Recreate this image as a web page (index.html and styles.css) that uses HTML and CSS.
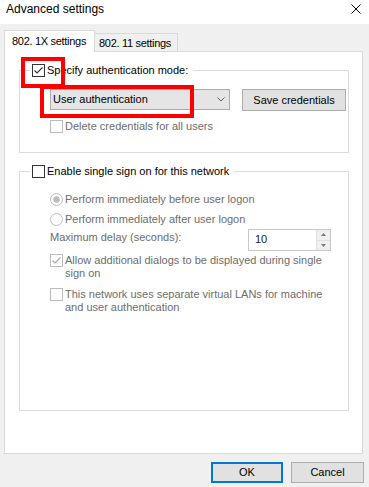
FILE: index.html
```html
<!DOCTYPE html>
<html lang="en">
<head>
<meta charset="utf-8">
<title>Advanced settings</title>
<link rel="stylesheet" href="styles.css">
</head>
<body>
  <div class="titlebar">
    <span class="title">Advanced settings</span>
    <svg class="close" width="10" height="10" viewBox="0 0 10 10"><path d="M0.5 0.5L9.5 9.5M9.5 0.5L0.5 9.5" stroke="#000" stroke-width="1" fill="none"/></svg>
  </div>
  <div class="main">
    <div class="tabs">
      <div class="tab active">802. 1X settings</div>
      <div class="tab inactive">802. 11 settings</div>
    </div>
    <div class="panel">
      <div class="group g1">
        <div class="legend check">
          <svg class="cb" viewBox="0 0 13 13"><rect x="0.5" y="0.5" width="12" height="12" fill="#fff" stroke="#333"/><path d="M2.5 6.5L5 9L10.5 3.5" stroke="#333" stroke-width="1.1" fill="none"/></svg>
          <span>Specify authentication mode:</span>
        </div>
        <div class="row">
          <div class="combo"><span>User authentication</span><svg class="chev" width="8" height="5" viewBox="0 0 8 5"><path d="M0.5 0.5L4 4L7.5 0.5" stroke="#606060" fill="none"/></svg></div>
          <div class="btn save">Save credentials</div>
        </div>
        <div class="check disabled delete">
          <svg class="cb" viewBox="0 0 13 13"><rect x="0.5" y="0.5" width="12" height="12" fill="#fff" stroke="#bcbcbc"/></svg>
          <span>Delete credentials for all users</span>
        </div>
      </div>
      <div class="group g2">
        <div class="legend check">
          <svg class="cb" viewBox="0 0 13 13"><rect x="0.5" y="0.5" width="12" height="12" fill="#fff" stroke="#333"/></svg>
          <span>Enable single sign on for this network</span>
        </div>
        <div class="check disabled r1">
          <svg class="cb" viewBox="0 0 13 13"><circle cx="6.5" cy="6.5" r="6" fill="#fff" stroke="#bcbcbc"/><circle cx="6.5" cy="6.5" r="3.2" fill="#bcbcbc"/></svg>
          <span>Perform immediately before user logon</span>
        </div>
        <div class="check disabled r2">
          <svg class="cb" viewBox="0 0 13 13"><circle cx="6.5" cy="6.5" r="6" fill="#fff" stroke="#bcbcbc"/></svg>
          <span>Perform immediately after user logon</span>
        </div>
        <div class="delay">
          <span class="delay-label disabled">Maximum delay (seconds):</span>
          <div class="spin">
            <span class="spin-value">10</span>
            <div class="spin-arrows">
              <div class="arrow"><svg width="5" height="3" viewBox="0 0 5 3"><path d="M0 3L2.5 0L5 3Z" fill="#7a7a7a"/></svg></div>
              <div class="arrow"><svg width="5" height="3" viewBox="0 0 5 3"><path d="M0 0L2.5 3L5 0Z" fill="#7a7a7a"/></svg></div>
            </div>
          </div>
        </div>
        <div class="check disabled allow">
          <svg class="cb" viewBox="0 0 13 13"><rect x="0.5" y="0.5" width="12" height="12" fill="#fff" stroke="#bcbcbc"/><path d="M2.5 6.5L5 9L10.5 3.5" stroke="#a8a8a8" stroke-width="1.1" fill="none"/></svg>
          <span>Allow additional dialogs to be displayed during single<br>sign on</span>
        </div>
        <div class="check disabled vlan">
          <svg class="cb" viewBox="0 0 13 13"><rect x="0.5" y="0.5" width="12" height="12" fill="#fff" stroke="#bcbcbc"/></svg>
          <span>This network uses separate virtual LANs for machine<br>and user authentication</span>
        </div>
      </div>
    </div>
    <div class="footer">
      <div class="btn ok">OK</div>
      <div class="btn cancel">Cancel</div>
    </div>
  </div>
  <div class="hl hl1"></div>
  <div class="hl hl2"></div>
</body>
</html>
```
FILE: styles.css
```css
* { box-sizing: border-box; }
html, body { margin: 0; padding: 0; }
body {
  width: 369px;
  height: 487px;
  overflow: hidden;
  position: relative;
  background: #f0f0f0;
  color: #000;
  font-family: "Liberation Sans", Arial, sans-serif;
  font-size: 11px;
}
.titlebar {
  height: 24px;
  background: #fff;
  display: flex;
  align-items: flex-start;
  padding: 1px 0 0 6px;
}
.title { font-size: 12px; line-height: 16px; }
.close { margin: 3px 8px 0 auto; }

.main { padding: 6px 6px 0 4px; }

.tabs { display: flex; align-items: flex-end; }
.tab {
  line-height: 13px;
  letter-spacing: -0.3px;
  white-space: nowrap;
  border: 1px solid #d9d9d9;
  border-bottom: 0;
}
.tab.active {
  position: relative;
  z-index: 1;
  width: 91px;
  height: 22px;
  margin-bottom: -1px;
  padding: 4px 0 0 7px;
  background: #fff;
}
.tab.inactive {
  width: 84px;
  height: 18px;
  margin-left: -1px;
  padding: 3px 0 0 4px;
  background: #f0f0f0;
}

.panel {
  height: 403px;
  background: #fff;
  border: 1px solid #d9d9d9;
  padding: 18px 13px 0 14px;
}
.group {
  border: 1px solid #dcdcdc;
  padding: 0 0 0 30px;
}
.g1 { padding-bottom: 19px; }
.g2 { margin-top: 18px; padding-bottom: 96px; }

.check { display: flex; align-items: flex-start; line-height: 13px; }
.cb { flex: none; width: 13px; height: 13px; margin-right: 2px; display: block; }
.disabled { color: #6d6d6d; }

.legend {
  width: max-content;
  margin: -7px 0 0 -20px;
  padding: 0 5px 0 2px;
  background: #fff;
  color: #000;
}

.row { display: flex; align-items: flex-start; height: 22px; margin-top: 12px; }
.combo {
  width: 180px;
  height: 21px;
  border: 1px solid #acacac;
  background: #e5e5e5;
  display: flex;
  align-items: center;
  padding-left: 2px;
  line-height: 19px;
}
.chev { margin-left: auto; margin-right: 4px; display: block; }
.btn {
  border: 1px solid #adadad;
  background: #e1e1e1;
  text-align: center;
}
.save { width: 104px; height: 22px; margin-left: 12px; padding-top: 1px; line-height: 19px; }
.delete { margin-top: 9px; }

.r1 { margin-top: 15px; }
.r2 { margin-top: 7px; }
.delay { display: flex; align-items: flex-start; height: 22px; margin-top: 3px; }
.delay-label { margin-top: 2px; line-height: 13px; }
.spin {
  margin-left: auto;
  margin-right: 17px;
  width: 83px;
  height: 22px;
  border: 1px solid #c8c8c8;
  background: #fff;
  display: flex;
}
.spin-value { flex: 1; padding: 3px 0 0 6px; line-height: 13px; color: #222; }
.spin-arrows {
  width: 14px;
  display: flex;
  flex-direction: column;
  background: #f0f0f0;
  border-left: 1px solid #e0e0e0;
}
.arrow { flex: 1; display: flex; align-items: center; justify-content: center; }
.arrow + .arrow { border-top: 1px solid #e0e0e0; }
.allow { margin-top: 3px; }
.vlan { margin-top: 8px; }

.footer {
  display: flex;
  justify-content: flex-end;
  gap: 8px;
  margin-top: 8px;
  margin-right: -1px;
}
.ok { width: 72px; height: 21px; border: 2px solid #0078d7; line-height: 17px; }
.cancel { width: 73px; height: 21px; line-height: 19px; }

.hl { position: absolute; border: 4px solid #ff0000; }
.hl1 { left: 21px; top: 57px; width: 44px; height: 31px; }
.hl2 { left: 40px; top: 85px; width: 154px; height: 33px; }
```
